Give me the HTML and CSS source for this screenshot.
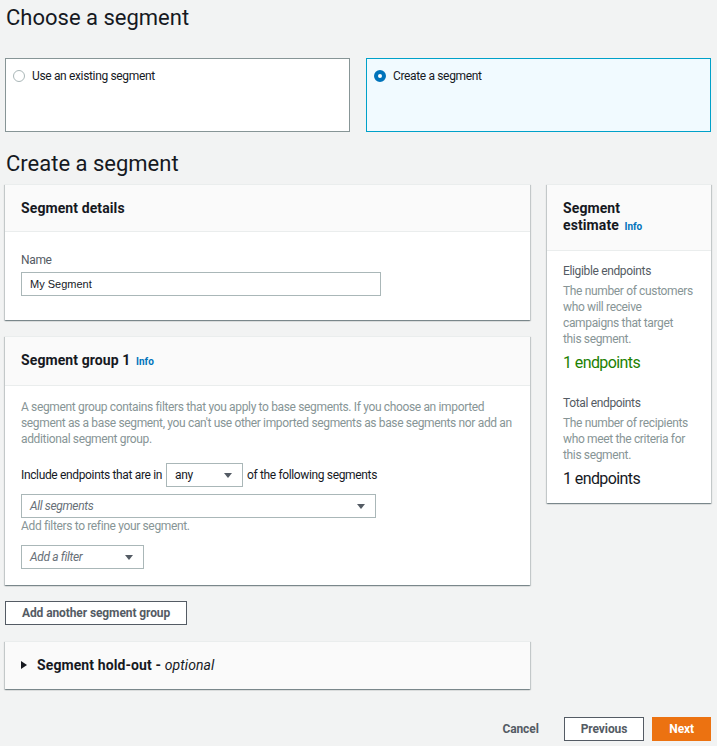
FILE: index.html
```html
<!DOCTYPE html>
<html lang="en">
<head>
<meta charset="utf-8">
<title>Choose a segment</title>
<link rel="stylesheet" href="styles.css">
</head>
<body>
<h1 class="page-title">Choose a segment</h1>
<div class="tiles">
  <div class="tile">
    <span class="radio"></span>
    <span class="tile-label">Use an existing segment</span>
  </div>
  <div class="tile tile-selected">
    <span class="radio radio-checked"></span>
    <span class="tile-label">Create a segment</span>
  </div>
</div>

<h2 class="section-title">Create a segment</h2>

<div class="layout">
  <div class="main">
    <section class="card">
      <div class="card-header"><h3 class="card-title">Segment details</h3></div>
      <div class="card-body details-body">
        <div class="field-label">Name</div>
        <div class="input">My Segment</div>
      </div>
    </section>

    <section class="card">
      <div class="card-header"><h3 class="card-title">Segment group 1 <span class="info">Info</span></h3></div>
      <div class="card-body group-body">
        <p class="desc">A segment group contains filters that you apply to base segments. If you choose an imported segment as a base segment, you can't use other imported segments as base segments nor add an additional segment group.</p>
        <div class="include-row">
          <span>Include endpoints that are in</span>
          <div class="select select-any"><span>any</span><svg class="caret" width="8" height="5" viewBox="0 0 8 5"><polygon points="0,0 8,0 4,5" fill="#545b64"/></svg></div>
          <span>of the following segments</span>
        </div>
        <div class="select select-wide"><span class="placeholder">All segments</span><svg class="caret" width="8" height="5" viewBox="0 0 8 5"><polygon points="0,0 8,0 4,5" fill="#545b64"/></svg></div>
        <div class="hint">Add filters to refine your segment.</div>
        <div class="select select-filter"><span class="placeholder">Add a filter</span><svg class="caret" width="8" height="5" viewBox="0 0 8 5"><polygon points="0,0 8,0 4,5" fill="#545b64"/></svg></div>
      </div>
    </section>

    <div class="btn-row">
      <button class="btn">Add another segment group</button>
    </div>

    <section class="card holdout">
      <svg class="expand" width="6" height="8" viewBox="0 0 6 8"><polygon points="0,0 6,4 0,8" fill="#16191f"/></svg>
      <span class="holdout-title">Segment hold-out - <em>optional</em></span>
    </section>
  </div>

  <aside class="aside card">
    <div class="card-header aside-header"><h3 class="card-title aside-title">Segment estimate <span class="info">Info</span></h3></div>
    <div class="aside-body">
      <div class="stat-label">Eligible endpoints</div>
      <div class="stat-desc">The number of customers<br>who will receive<br>campaigns that target<br>this segment.</div>
      <div class="stat-value stat-green">1 endpoints</div>
      <div class="stat-label stat-second">Total endpoints</div>
      <div class="stat-desc">The number of recipients<br>who meet the criteria for<br>this segment.</div>
      <div class="stat-value">1 endpoints</div>
    </div>
  </aside>
</div>

<div class="footer">
  <button class="btn btn-link">Cancel</button>
  <button class="btn">Previous</button>
  <button class="btn btn-primary">Next</button>
</div>
</body>
</html>
```

FILE: styles.css
```css
* { box-sizing: border-box; }
html, body { margin: 0; }
body {
  background: #f2f3f3;
  padding: 0 6px 20px 5px;
  font-family: Roboto, "Liberation Sans", sans-serif;
  color: #16191f;
  font-size: 12px;
  line-height: 16px;
  letter-spacing: -0.35px;
}
.page-title {
  margin: 4px 0 0 1px;
  font-size: 22px;
  line-height: 28px;
  font-weight: 400;
  letter-spacing: 0;
}
.tiles {
  display: grid;
  grid-template-columns: 1fr 1fr;
  gap: 16px;
  margin-top: 26px;
}
.tile {
  height: 74px;
  border: 1px solid #879596;
  background: #fff;
  display: flex;
  align-items: flex-start;
  gap: 7px;
  padding: 9px 7px 0;
}
.tile-label { line-height: 16px; }
.tile-selected {
  border-color: #00a1c9;
  background: #f1faff;
}
.radio {
  width: 12px;
  height: 12px;
  margin-top: 2px;
  border-radius: 50%;
  border: 1px solid #aab7b8;
  background: #fff;
  flex: none;
}
.radio-checked {
  border: 4px solid #0073bb;
}
.section-title {
  margin: 18px 0 6px 1px;
  font-size: 22px;
  line-height: 28px;
  font-weight: 400;
  letter-spacing: 0;
}
.layout {
  display: flex;
  gap: 17px;
  align-items: flex-start;
}
.main {
  width: 525px;
  display: flex;
  flex-direction: column;
  gap: 16px;
}
.card {
  background: #fff;
  border-top: 1px solid #eaeded;
  box-shadow: 0 1px 1px 0 rgba(0, 28, 36, .3), 1px 1px 1px 0 rgba(0, 28, 36, .15), -1px 1px 1px 0 rgba(0, 28, 36, .15);
}
.card-header {
  background: #fafafa;
  border-bottom: 1px solid #eaeded;
  padding: 14px 16px;
}
.card-title {
  margin: 0;
  font-size: 14px;
  line-height: 18px;
  font-weight: 700;
  letter-spacing: 0.1px;
}
.info {
  color: #0073bb;
  font-size: 10px;
  font-weight: 700;
  margin-left: 2px;
  letter-spacing: 0;
}
.card-body { padding: 0 16px; }
.details-body { padding-top: 20px; padding-bottom: 24px; }
.field-label { color: #545b64; margin-bottom: 4px; }
.input {
  width: 360px;
  height: 24px;
  border: 1px solid #aab7b8;
  padding: 0 8px;
  display: flex;
  align-items: center;
  font-family: "Liberation Sans", Arial, sans-serif;
  font-size: 11px;
  letter-spacing: 0;
}
.group-body { padding-top: 13px; padding-bottom: 16px; }
.desc {
  margin: 0;
  color: #879596;
}
.include-row {
  display: flex;
  align-items: center;
  gap: 4px;
  margin-top: 16px;
}
.select {
  height: 24px;
  border: 1px solid #aab7b8;
  background: #fff;
  display: flex;
  align-items: center;
  justify-content: space-between;
  padding: 0 10px 0 8px;
}
.select-any { width: 77px; }
.select-wide { width: 355px; margin-top: 7px; }
.select-filter { width: 123px; margin-top: 11px; }
.placeholder { font-style: italic; color: #687078; }
.caret { display: block; }
.hint { color: #879596; }
.btn-row { display: flex; }
.btn {
  font-family: inherit;
  font-size: 12px;
  font-weight: 700;
  line-height: 16px;
  letter-spacing: -0.1px;
  color: #545b64;
  background: #fff;
  border: 1px solid #545b64;
  height: 24px;
  padding: 0 16px;
  cursor: pointer;
}
.holdout {
  display: flex;
  align-items: center;
  gap: 10px;
  padding: 14px 16px 15px;
  background: #fafafa;
}
.expand { display: block; }
.holdout-title {
  font-size: 14px;
  line-height: 18px;
  font-weight: 700;
  letter-spacing: 0.1px;
}
.holdout-title em { font-weight: 400; }
.aside { width: 164px; }
.aside-header { padding: 15px 16px; }
.aside-title { line-height: 17px; max-width: 100px; }
.aside-body { padding: 12px 12px 14px 16px; }
.stat-label { color: #545b64; }
.stat-desc { color: #879596; margin-top: 4px; }
.stat-value { font-size: 16px; line-height: 20px; margin-top: 6px; letter-spacing: -0.6px; }
.stat-green { color: #1d8102; }
.stat-second { margin-top: 22px; }
.footer {
  display: flex;
  justify-content: flex-end;
  align-items: center;
  gap: 8px;
  margin-top: 28px;
}
.btn-link {
  border-color: transparent;
  background: transparent;
}
.btn-primary {
  background: #ec7211;
  border-color: #ec7211;
  color: #fff;
}
```
